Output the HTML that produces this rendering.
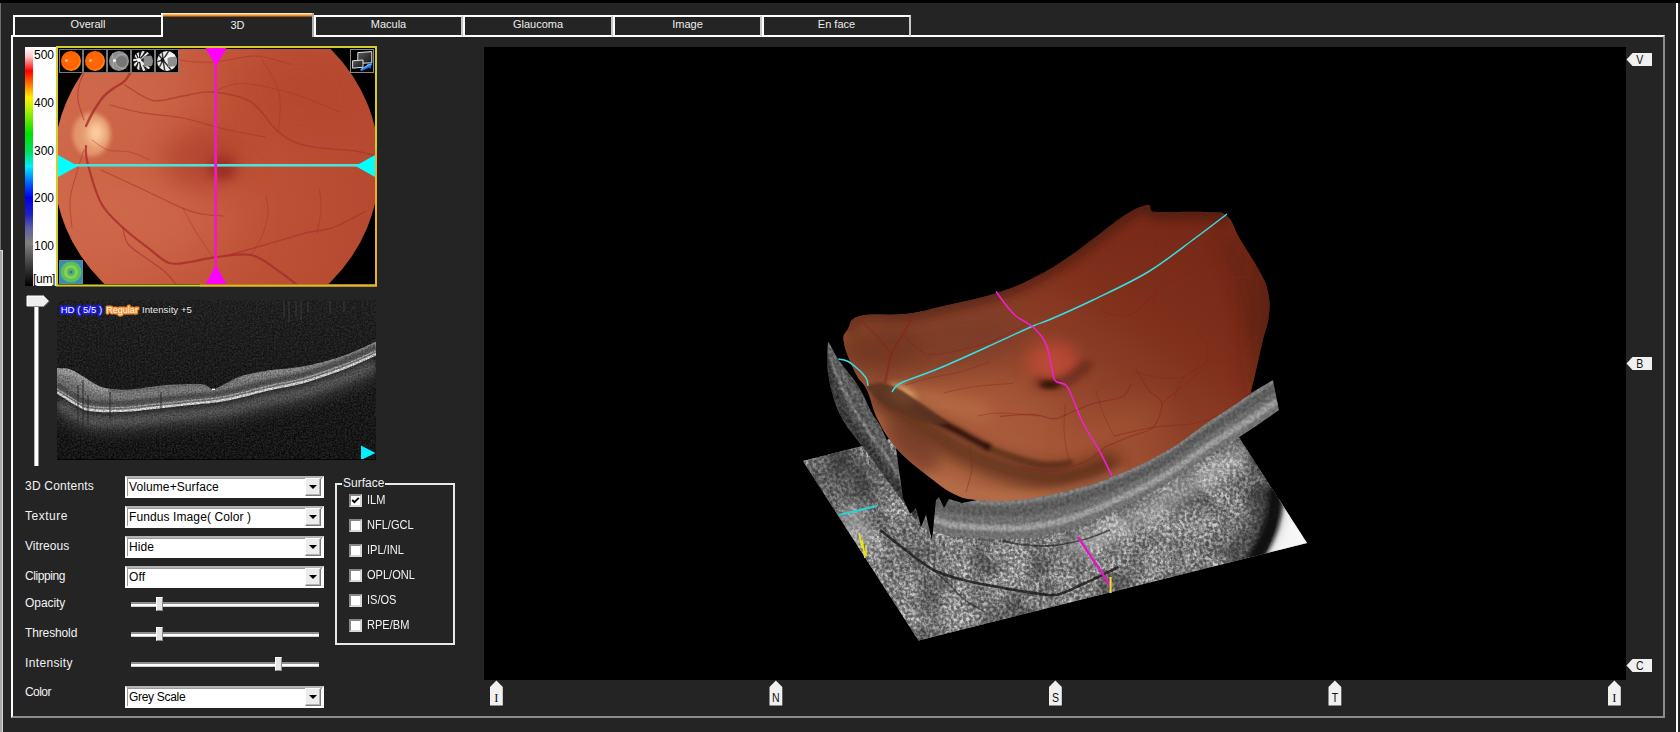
<!DOCTYPE html>
<html lang="en">
<head>
<meta charset="utf-8">
<title>3D OCT Viewer</title>
<style>
html,body{margin:0;padding:0;background:#242424;}
body{width:1680px;height:732px;overflow:hidden;position:relative;font-family:"Liberation Sans",sans-serif;font-size:12px;color:#f0f0f0;}
.abs{position:absolute;}
#topstrip{left:0;top:0;width:1680px;height:3px;background:#000;}
#leftstrip{left:0;top:3px;width:1px;height:729px;background:#6c6c6c;}
#leftgrey{left:0;top:250px;width:2px;height:482px;background:#a8a8a8;border-right:1px solid #d6d6d6;border-top:1px solid #d6d6d6;}
#rightwhite{left:1676px;top:3px;width:2px;height:729px;background:#fff;}
/* main panel */
#panel{left:11px;top:35px;width:1650px;height:679px;border:2px solid #fff;border-right-color:#8c8c8c;border-bottom-color:#8c8c8c;}
.tab{position:absolute;top:15px;height:18px;border:2px solid #fff;border-right-color:#c8c8c8;box-sizing:content-box;text-align:center;font-size:11px;line-height:15px;color:#ececec;background:#242424;}
#tab3d{top:13px;height:24px;border:0;border-left:2px solid #fff;border-right:2px solid #b0b0b0;background:#242424;line-height:25px;}
#tab3d .org{position:absolute;left:0;top:0;right:0;height:4px;background:linear-gradient(#fff4e0 0,#ffd9a0 25%,#f39a3c 50%,#e08020 74%,#5a2c08 100%);}
/* dropdowns */
.lbl{position:absolute;left:25px;font-size:12px;color:#f2f2f2;white-space:nowrap;}
.dd{position:absolute;left:125px;width:195px;height:18px;border:2px solid #fff;border-top-color:#b4b4b4;box-shadow:inset 1px 1px 0 #9a9a9a;background:#fff;color:#000;font-size:12px;line-height:18px;box-sizing:content-box;}
.dd span{position:absolute;left:2px;top:0px;white-space:nowrap;letter-spacing:.1px;}
.dd i{position:absolute;right:1px;top:0;width:14px;height:16px;background:#ececec;border:1px solid #fff;border-right-color:#7c7c7c;border-bottom-color:#7c7c7c;box-shadow:inset -1px -1px 0 #b4b4b4;}
.dd i:after{content:"";position:absolute;left:3px;top:6px;border:4px solid transparent;border-top:4px solid #000;border-bottom:0;}
/* sliders */
.trk{position:absolute;left:131px;width:188px;height:2px;background:#fff;border-top:2px solid #8e8e8e;border-bottom:1px solid #cfcfcf;}
.thb{position:absolute;width:5px;height:12px;background:#e6e6e6;border:1px solid #fff;border-right-color:#8a8a8a;border-bottom-color:#8a8a8a;}
/* checkboxes */
.cb{position:absolute;left:349px;width:9px;height:9px;background:#fff;border:2px solid #d8d8d8;border-top-color:#888;border-left-color:#888;}
.cbl{position:absolute;left:367px;font-size:12px;color:#f2f2f2;white-space:nowrap;transform:scaleX(.92);transform-origin:0 0;}
.mk{position:absolute;font-size:10px;color:#111;}
</style>
</head>
<body>
<div id="topstrip" class="abs"></div>
<div id="leftstrip" class="abs"></div>
<div id="leftgrey" class="abs"></div>
<div id="rightwhite" class="abs"></div>

<div id="panel" class="abs"></div>

<!-- tabs -->
<div class="tab" style="left:13px;width:146px;">Overall</div>
<div class="tab" style="left:314px;width:145px;">Macula</div>
<div class="tab" style="left:463px;width:146px;">Glaucoma</div>
<div class="tab" style="left:613px;width:145px;">Image</div>
<div class="tab" style="left:762px;width:145px;">En face</div>
<div class="tab" id="tab3d" style="left:161px;width:149px;"><div class="org"></div>3D</div>

<!-- LEFT: colour bar + fundus -->
<div id="fundusWrap" class="abs" style="left:25px;top:46px;width:353px;height:241px;">
<div style="position:absolute;left:0;top:1px;width:9px;height:239px;background:linear-gradient(to bottom,#ffffff 0%,#ffc8c8 4%,#ff0000 10%,#ff6a00 15%,#ffee00 21%,#c8f000 25%,#00e000 36%,#00e060 44%,#00f0ff 50%,#0060ff 57%,#0000e8 63%,#2020c0 70%,#6060a0 76%,#808080 82%,#404040 91%,#000000 100%);"></div>
<div style="position:absolute;left:8px;top:1px;width:24px;height:239px;background:#fff;color:#000;font-size:12px;line-height:12px;">
  <span style="position:absolute;left:1px;top:2px;">500</span>
  <span style="position:absolute;left:1px;top:50px;">400</span>
  <span style="position:absolute;left:1px;top:98px;">300</span>
  <span style="position:absolute;left:1px;top:145px;">200</span>
  <span style="position:absolute;left:1px;top:193px;">100</span>
  <span style="position:absolute;left:0px;top:226px;letter-spacing:-0.3px;">[um]</span>
</div>
<svg width="322" height="241" viewBox="56 46 322 241" style="position:absolute;left:31px;top:0;display:block">
<defs>
  <filter id="f05" filterUnits="userSpaceOnUse" x="56" y="46" width="322" height="241"><feGaussianBlur stdDeviation="0.5"/></filter>
  <filter id="f2" filterUnits="userSpaceOnUse" x="56" y="46" width="322" height="241"><feGaussianBlur stdDeviation="2"/></filter>
  <filter id="f5" filterUnits="userSpaceOnUse" x="56" y="46" width="322" height="241"><feGaussianBlur stdDeviation="5"/></filter>
  <filter id="f12" filterUnits="userSpaceOnUse" x="56" y="46" width="322" height="241"><feGaussianBlur stdDeviation="12"/></filter>
  <filter id="f25" filterUnits="userSpaceOnUse" x="56" y="46" width="322" height="241"><feGaussianBlur stdDeviation="25"/></filter>
  <clipPath id="fcirc"><circle cx="216.5" cy="165.5" r="163"/></clipPath>
  <clipPath id="fbox"><rect x="58" y="49" width="317" height="235"/></clipPath>
  <linearGradient id="fbase" gradientUnits="userSpaceOnUse" x1="60" y1="120" x2="375" y2="200">
    <stop offset="0" stop-color="#d06a4c"/>
    <stop offset="0.5" stop-color="#c2563a"/>
    <stop offset="1" stop-color="#b64a30"/>
  </linearGradient>
  <radialGradient id="thO" cx="0.45" cy="0.45" r="0.6">
    <stop offset="0" stop-color="#ff6a08"/><stop offset="0.7" stop-color="#ff6200"/><stop offset="1" stop-color="#ffa018"/>
  </radialGradient>
  <radialGradient id="thG" cx="0.5" cy="0.5" r="0.55">
    <stop offset="0" stop-color="#8a8a8a"/><stop offset="1" stop-color="#b0b0b0"/>
  </radialGradient>
</defs>
<rect x="57" y="47.500" width="319.500" height="238" fill="#000"/>
<g clip-path="url(#fbox)">
 <g clip-path="url(#fcirc)">
  <rect x="50" y="0" width="340" height="340" fill="url(#fbase)"/>
  <ellipse cx="300" cy="95" rx="70" ry="50" fill="#b0432c" opacity="0.6" filter="url(#f25)"/>
  <ellipse cx="150" cy="215" rx="80" ry="50" fill="#d47252" opacity="0.5" filter="url(#f25)"/>
  <ellipse cx="140" cy="100" rx="50" ry="35" fill="#d06e50" opacity="0.5" filter="url(#f25)"/>
  <!-- macula -->
  <ellipse cx="205" cy="160" rx="42" ry="30" fill="#a83a2a" opacity="0.55" filter="url(#f12)"/>
  <ellipse cx="222" cy="168" rx="14" ry="12" fill="#962a20" opacity="0.8" filter="url(#f5)"/>
  <!-- optic disc -->
  <ellipse cx="91.500" cy="134.500" rx="19" ry="22" fill="#e69c70" opacity="0.9" filter="url(#f2)"/>
  <ellipse cx="96" cy="133" rx="9" ry="12" fill="#ffd6a6" opacity="0.9" filter="url(#f5)"/>
  <!-- vessels -->
  <g fill="none" stroke="#a82c2c" stroke-linecap="round" filter="url(#f05)">
   <path d="M86.0,126.0 C87.2,123.7 90.0,116.9 93.0,112.0 C96.0,107.1 100.2,100.4 103.7,96.4 C107.2,92.4 110.3,90.7 114.0,88.0 C117.7,85.3 121.9,84.3 125.6,80.0 C129.3,75.7 132.6,67.3 136.0,62.0 C139.4,56.7 144.3,50.3 146.0,48.0" stroke-width="2.4" opacity="0.8"/>
   <path d="M125.0,85.0 C129.7,87.6 143.3,98.7 153.0,100.5 C162.7,102.3 173.0,97.4 183.0,96.0 C193.0,94.6 201.7,91.0 213.0,92.0 C224.3,93.0 240.1,95.3 251.0,102.0 C261.9,108.7 269.4,124.7 278.6,132.0 C287.8,139.3 293.3,142.4 306.0,145.6 C318.7,148.8 343.3,149.3 355.0,151.0 C366.7,152.7 372.5,155.2 376.0,156.0" stroke-width="1.4" opacity="0.6"/>
   <path d="M110.0,105.0 C115.3,106.3 129.8,110.6 142.0,112.8 C154.2,115.0 169.3,115.3 183.0,118.0 C196.7,120.7 210.3,125.8 224.0,129.0 C237.7,132.2 258.2,135.7 265.0,137.0" stroke-width="1.2" opacity="0.55"/>
   <path d="M84.0,120.0 C83.0,116.7 78.7,106.3 78.0,100.0 C77.3,93.7 78.3,87.7 80.0,82.0 C81.7,76.3 86.7,68.7 88.0,66.0" stroke-width="1.2" opacity="0.55"/>
   <path d="M86.0,146.0 C86.2,148.7 84.8,152.5 87.3,162.0 C89.8,171.5 95.1,192.1 101.0,203.0 C106.9,213.9 114.6,219.8 122.8,227.5 C131.0,235.2 142.3,243.5 150.0,249.4 C157.7,255.3 162.3,260.9 169.0,263.0 C175.7,265.1 182.7,262.9 190.0,262.0 C197.3,261.1 202.8,258.8 213.0,257.6 C223.2,256.4 240.1,252.8 251.0,255.0 C261.9,257.2 271.1,266.2 278.6,271.0 C286.1,275.8 293.1,281.8 296.0,284.0" stroke-width="2.2" opacity="0.8"/>
   <path d="M122.8,227.5 C123.7,230.2 124.1,238.9 128.0,244.0 C131.9,249.1 140.0,253.5 146.0,258.0 C152.0,262.5 159.0,266.7 164.0,271.0 C169.0,275.3 174.0,281.8 176.0,284.0" stroke-width="1.3" opacity="0.6"/>
   <path d="M101.0,170.0 C107.8,173.2 128.3,182.6 142.0,189.0 C155.7,195.4 173.0,204.2 183.0,208.4 C193.0,212.6 195.2,212.7 202.0,214.0 C208.8,215.3 220.3,215.7 224.0,216.0" stroke-width="1.2" opacity="0.55"/>
   <path d="M229.4,255.0 C235.8,253.2 254.9,247.7 267.7,244.0 C280.5,240.3 295.1,235.8 306.0,233.0 C316.9,230.2 323.0,231.2 333.0,227.5 C343.0,223.8 360.5,213.8 366.0,211.0" stroke-width="1.4" opacity="0.6"/>
   <path d="M319.6,189.0 C319.8,192.5 321.4,202.7 321.0,210.0 C320.6,217.3 317.7,229.2 317.0,233.0" stroke-width="1.0" opacity="0.5"/>
   <path d="M84.0,150.0 C82.7,154.2 78.3,166.7 76.0,175.0 C73.7,183.3 70.7,191.2 70.0,200.0 C69.3,208.8 71.7,223.3 72.0,228.0" stroke-width="1.1" opacity="0.5"/>
   <path d="M146.0,48.0 C151.7,50.0 168.5,57.7 180.0,60.0 C191.5,62.3 202.5,62.7 215.0,62.0 C227.5,61.3 242.5,55.7 255.0,56.0 C267.5,56.3 284.2,62.7 290.0,64.0" stroke-width="1.1" opacity="0.5"/>
   <path d="M262.0,60.0 C264.0,63.3 271.0,73.3 274.0,80.0 C277.0,86.7 279.2,91.3 280.0,100.0 C280.8,108.7 278.8,126.7 278.6,132.0" stroke-width="1.0" opacity="0.45"/>
   <path d="M213.0,92.0 C216.7,90.7 226.8,85.0 235.0,84.0 C243.2,83.0 251.2,84.0 262.0,86.0 C272.8,88.0 287.0,91.7 300.0,96.0 C313.0,100.3 333.3,109.3 340.0,112.0" stroke-width="1.0" opacity="0.45"/>
   <path d="M183.0,208.4 C185.2,212.3 191.0,223.8 196.0,232.0 C201.0,240.2 210.2,253.3 213.0,257.6" stroke-width="1.0" opacity="0.45"/>
   <path d="M251.0,255.0 C252.8,251.8 259.2,242.8 262.0,236.0 C264.8,229.2 267.3,220.7 268.0,214.0 C268.7,207.3 266.3,199.0 266.0,196.0" stroke-width="1.0" opacity="0.45"/>
   <path d="M92.0,140.0 C94.7,141.7 101.7,148.0 108.0,150.0 C114.3,152.0 123.0,150.3 130.0,152.0 C137.0,153.7 146.7,158.7 150.0,160.0" stroke-width="1.0" opacity="0.45"/>
  </g>
 </g>
</g>
<!-- scan lines -->
<rect x="58" y="164" width="317" height="2.600" fill="#4fe0d8"/>
<path d="M58,155 L78,166 L58,177 Z M375,155 L355.500,166 L375,177 Z" fill="#00ffff"/>
<rect x="214.200" y="49" width="2.900" height="235" fill="#ee1cc0"/>
<path d="M205.500,48 L226.500,48 L216,66 Z M205.500,284 L226.500,284 L216,265.500 Z" fill="#ff00ff"/>
<!-- thumbnails -->
<g>
 <rect x="59.500" y="49.500" width="23" height="23" fill="#000" stroke="#787878"/>
 <circle cx="71" cy="61" r="10" fill="url(#thO)"/><circle cx="66.500" cy="60.500" r="1.300" fill="#ffd0a0"/>
 <rect x="83.500" y="49.500" width="23" height="23" fill="#000" stroke="#787878"/>
 <circle cx="95" cy="61" r="10" fill="url(#thO)"/><circle cx="90.500" cy="60.500" r="1.300" fill="#ffd0a0"/>
 <rect x="107.500" y="49.500" width="23" height="23" fill="#000" stroke="#787878"/>
 <circle cx="119" cy="61" r="10" fill="#8e8e8e"/>
 <circle cx="121.500" cy="61.500" r="5.500" fill="#747474" filter="url(#f05)"/>
 <path d="M114.500,60.500 C117,54 123,52.500 127.500,56 M114.500,60.500 C116,66 121,70 126,68 M114.500,60.500 C112,57 112,55 113,53 M114.500,60.500 C112.500,64 112.500,66 114,69" stroke="#b4b4b4" stroke-width=".8" fill="none"/>
 <circle cx="114.500" cy="60.500" r="1.600" fill="#f4f4f4"/>
 <rect x="131.500" y="49.500" width="23" height="23" fill="#000" stroke="#787878"/>
 <clipPath id="t4c"><circle cx="143" cy="61" r="10"/></clipPath>
 <g clip-path="url(#t4c)">
  <rect x="132" y="50" width="22" height="22" fill="#262626"/>
  <path d="M139,60 L133,52 M139,60 L137,50 M139,60 L144,50 M139,60 L150,51 M139,60 L132,60 M139,60 L133,67 M139,60 L138,72 M139,60 L145,72 M139,60 L151,70" stroke="#e8e8e8" stroke-width="2.200" fill="none"/>
  <path d="M139,60 L134.500,50 M139,60 L141,50 M139,60 L147,51 M139,60 L132,63.500 M139,60 L135,71 M139,60 L142,72" stroke="#1a1a1a" stroke-width="1.200" fill="none"/>
  <path d="M143.500,56.500 L153,55.500 L153.500,66 L144,66.500 Z" fill="#8a8a8a"/>
  <circle cx="139" cy="60" r="2" fill="#fff"/>
 </g>
 <rect x="155.500" y="49.500" width="23" height="23" fill="#000" stroke="#787878"/>
 <clipPath id="t5c"><circle cx="167" cy="61" r="10"/></clipPath>
 <g clip-path="url(#t5c)">
  <rect x="156" y="50" width="22" height="22" fill="#ececec"/>
  <path d="M163,60 L157,53 M163,60 L162,50 M163,60 L169,50.500 M163,60 L156,62 M163,60 L158,70 M163,60 L165,72 M163,60 L172,71" stroke="#3a3a3a" stroke-width="1.500" fill="none"/>
  <path d="M167.500,57.500 L177.500,56.500 L177.500,66 L168,67 Z" fill="#8e8e8e"/>
  <path d="M163,60 L170,55.500 L176,55" stroke="#fafafa" stroke-width="1.600" fill="none"/>
  <circle cx="162.500" cy="60" r="2" fill="#101010"/>
 </g>
</g>
<!-- top right icon -->
<g>
 <rect x="350.500" y="49.500" width="23" height="23" fill="#000" stroke="#8a8a8a"/>
 <linearGradient id="mon" x1="0" y1="0" x2="1" y2="1"><stop offset="0" stop-color="#5a5a5a"/><stop offset="1" stop-color="#161616"/></linearGradient>
 <path d="M357.800,52.600 L371.800,51.600 L371.800,62.800 L357.800,63.400 Z" fill="url(#mon)" stroke="#e4e4e4" stroke-width="1"/>
 <path d="M352.600,60.800 L363,60 L363,67.200 L352.600,68.200 Z" fill="url(#mon)" stroke="#e4e4e4" stroke-width="1"/>
 <path d="M359.800,69.800 L367.500,65 L366.300,63.600 L372.400,63.200 L370.300,69 L369.200,67.400 L361.200,71.300 Z" fill="#1f78e6"/>
 <path d="M361,69.300 L368,65.200 L371.200,64" fill="none" stroke="#7cd4ff" stroke-width=".9"/>
</g>
<!-- bottom-left thickness map thumb -->
<g>
 <rect x="59" y="260" width="24" height="24" fill="#3c8ab0"/>
 <circle cx="71" cy="272" r="10.500" fill="#58c060"/>
 <circle cx="71" cy="272" r="7" fill="#8ad048"/>
 <circle cx="71" cy="272" r="4" fill="#50b868"/>
 <circle cx="71" cy="272" r="1.600" fill="#2a70c0"/>
 <rect x="59.500" y="260.500" width="23" height="23" fill="none" stroke="#5a8a9a"/>
</g>
<!-- yellow frame -->
<rect x="57" y="47" width="319" height="238.500" fill="none" stroke="#d2cc2c" stroke-width="2"/>
<path d="M376,150 L376,285.500 L200,285.500" fill="none" stroke="#eeb02c" stroke-width="2"/>
</svg>

</div>

<!-- LEFT: b-scan -->
<div id="bscanWrap" class="abs" style="left:57px;top:300px;width:319px;height:160px;background:#111;">
<svg width="319" height="160" viewBox="57 300 319 160" style="position:absolute;left:0;top:0;display:block">
<defs>
  <filter id="bn" x="0" y="0" width="100%" height="100%" color-interpolation-filters="sRGB">
    <feTurbulence type="fractalNoise" baseFrequency="0.55" numOctaves="2" seed="3" result="n"/>
    <feColorMatrix in="n" type="matrix" values="0 0 0 0 0  0 0 0 0 0  0 0 0 0 0  2 2 0 0 -1.5" result="a"/>
    <feComposite in="SourceGraphic" in2="a" operator="in"/>
  </filter>
  <filter id="bnd" x="0" y="0" width="100%" height="100%" color-interpolation-filters="sRGB">
    <feTurbulence type="fractalNoise" baseFrequency="0.6" numOctaves="2" seed="11" result="n"/>
    <feColorMatrix in="n" type="matrix" values="0 0 0 0 0  0 0 0 0 0  0 0 0 0 0  2 2 0 0 -1.6" result="a"/>
    <feComposite in="SourceGraphic" in2="a" operator="in"/>
  </filter>
  <filter id="g05" filterUnits="userSpaceOnUse" x="57" y="300" width="319" height="160"><feGaussianBlur stdDeviation="0.6"/></filter>
  <filter id="g1" filterUnits="userSpaceOnUse" x="57" y="300" width="319" height="160"><feGaussianBlur stdDeviation="1.2"/></filter>
  <filter id="g3" filterUnits="userSpaceOnUse" x="57" y="300" width="319" height="160"><feGaussianBlur stdDeviation="3"/></filter>
  <filter id="g8" filterUnits="userSpaceOnUse" x="57" y="300" width="319" height="160"><feGaussianBlur stdDeviation="7"/></filter>
  <linearGradient id="bbg" x1="0" y1="0" x2="0" y2="1"><stop offset="0" stop-color="#1d1d1d"/><stop offset="0.5" stop-color="#141414"/><stop offset="1" stop-color="#0c0c0c"/></linearGradient>
  <clipPath id="retClip"><path d="M57.0,368.0 C58.5,368.1 63.3,368.1 66.0,368.5 C68.7,368.9 70.0,369.1 73.0,370.5 C76.0,371.9 80.2,374.7 84.0,377.0 C87.8,379.3 92.0,382.6 96.0,384.5 C100.0,386.4 102.3,387.7 108.0,388.5 C113.7,389.3 120.3,390.1 130.0,389.5 C139.7,388.9 154.6,385.9 166.0,385.0 C177.4,384.1 191.8,383.8 198.6,384.0 C205.4,384.2 204.6,385.1 207.0,386.0 C209.4,386.9 211.0,389.3 213.0,389.5 C215.0,389.7 217.2,387.8 219.0,387.0 C220.8,386.2 220.5,386.2 224.0,384.5 C227.5,382.8 232.7,378.8 240.0,376.5 C247.3,374.2 257.5,372.2 268.0,370.5 C278.5,368.8 291.4,368.6 303.0,366.5 C314.6,364.4 328.2,360.6 337.7,357.7 C347.2,354.8 353.6,351.7 360.0,349.0 C366.4,346.3 373.3,342.7 376.0,341.4 L376.0,354.2 C373.3,355.4 366.4,358.8 360.0,361.5 C353.6,364.2 347.2,367.1 337.7,370.5 C328.2,373.9 314.6,378.8 303.0,382.0 C291.4,385.2 278.5,387.1 268.0,389.5 C257.5,391.9 247.3,394.8 240.0,396.5 C232.7,398.2 227.5,399.3 224.0,400.0 C220.5,400.7 220.8,400.4 219.0,400.7 C217.2,401.0 215.0,401.3 213.0,401.6 C211.0,401.9 209.4,402.1 207.0,402.3 C204.6,402.5 205.4,402.3 198.6,403.0 C191.8,403.7 177.4,405.3 166.0,406.5 C154.6,407.7 139.7,409.6 130.0,410.4 C120.3,411.1 113.7,411.0 108.0,411.0 C102.3,411.0 99.9,410.9 96.0,410.5 C92.1,410.1 88.6,410.1 84.8,408.8 C81.0,407.5 76.1,404.3 73.0,402.5 C69.9,400.7 68.7,399.7 66.0,398.0 C63.3,396.3 58.5,393.4 57.0,392.5 Z"/></clipPath>
</defs>
<rect x="57" y="300" width="319" height="160" fill="url(#bbg)"/>
<rect x="57" y="300" width="319" height="160" fill="#3a3a3a" opacity="0.6" filter="url(#bn)"/>
<path d="M57.0,405.5 C58.5,406.4 63.3,409.3 66.0,411.0 C68.7,412.7 69.9,413.7 73.0,415.5 C76.1,417.3 81.0,420.5 84.8,421.8 C88.6,423.1 92.1,423.1 96.0,423.5 C99.9,423.9 102.3,424.0 108.0,424.0 C113.7,424.0 120.3,424.1 130.0,423.4 C139.7,422.6 154.6,420.7 166.0,419.5 C177.4,418.3 191.8,416.7 198.6,416.0 C205.4,415.3 204.6,415.5 207.0,415.3 C209.4,415.1 211.0,414.9 213.0,414.6 C215.0,414.3 217.2,414.0 219.0,413.7 C220.8,413.4 220.5,413.7 224.0,413.0 C227.5,412.3 232.7,411.2 240.0,409.5 C247.3,407.8 257.5,404.9 268.0,402.5 C278.5,400.1 291.4,398.2 303.0,395.0 C314.6,391.8 328.2,386.9 337.7,383.5 C347.2,380.1 353.6,377.2 360.0,374.5 C366.4,371.8 373.3,368.4 376.0,367.2" fill="none" stroke="#5c5c5c" stroke-width="18" opacity="0.62" filter="url(#g8)"/>
<path d="M57.0,402.5 C58.5,403.4 63.3,406.3 66.0,408.0 C68.7,409.7 69.9,410.7 73.0,412.5 C76.1,414.3 81.0,417.5 84.8,418.8 C88.6,420.1 92.1,420.1 96.0,420.5 C99.9,420.9 102.3,421.0 108.0,421.0 C113.7,421.0 120.3,421.1 130.0,420.4 C139.7,419.6 154.6,417.7 166.0,416.5 C177.4,415.3 191.8,413.7 198.6,413.0 C205.4,412.3 204.6,412.5 207.0,412.3 C209.4,412.1 211.0,411.9 213.0,411.6 C215.0,411.3 217.2,411.0 219.0,410.7 C220.8,410.4 220.5,410.7 224.0,410.0 C227.5,409.3 232.7,408.2 240.0,406.5 C247.3,404.8 257.5,401.9 268.0,399.5 C278.5,397.1 291.4,395.2 303.0,392.0 C314.6,388.8 328.2,383.9 337.7,380.5 C347.2,377.1 353.6,374.2 360.0,371.5 C366.4,368.8 373.3,365.4 376.0,364.2" fill="none" stroke="#787878" stroke-width="10" opacity="0.6" filter="url(#g3)"/>
<path d="M57.0,368.0 C58.5,368.1 63.3,368.1 66.0,368.5 C68.7,368.9 70.0,369.1 73.0,370.5 C76.0,371.9 80.2,374.7 84.0,377.0 C87.8,379.3 92.0,382.6 96.0,384.5 C100.0,386.4 102.3,387.7 108.0,388.5 C113.7,389.3 120.3,390.1 130.0,389.5 C139.7,388.9 154.6,385.9 166.0,385.0 C177.4,384.1 191.8,383.8 198.6,384.0 C205.4,384.2 204.6,385.1 207.0,386.0 C209.4,386.9 211.0,389.3 213.0,389.5 C215.0,389.7 217.2,387.8 219.0,387.0 C220.8,386.2 220.5,386.2 224.0,384.5 C227.5,382.8 232.7,378.8 240.0,376.5 C247.3,374.2 257.5,372.2 268.0,370.5 C278.5,368.8 291.4,368.6 303.0,366.5 C314.6,364.4 328.2,360.6 337.7,357.7 C347.2,354.8 353.6,351.7 360.0,349.0 C366.4,346.3 373.3,342.7 376.0,341.4 L376.0,354.2 C373.3,355.4 366.4,358.8 360.0,361.5 C353.6,364.2 347.2,367.1 337.7,370.5 C328.2,373.9 314.6,378.8 303.0,382.0 C291.4,385.2 278.5,387.1 268.0,389.5 C257.5,391.9 247.3,394.8 240.0,396.5 C232.7,398.2 227.5,399.3 224.0,400.0 C220.5,400.7 220.8,400.4 219.0,400.7 C217.2,401.0 215.0,401.3 213.0,401.6 C211.0,401.9 209.4,402.1 207.0,402.3 C204.6,402.5 205.4,402.3 198.6,403.0 C191.8,403.7 177.4,405.3 166.0,406.5 C154.6,407.7 139.7,409.6 130.0,410.4 C120.3,411.1 113.7,411.0 108.0,411.0 C102.3,411.0 99.9,410.9 96.0,410.5 C92.1,410.1 88.6,410.1 84.8,408.8 C81.0,407.5 76.1,404.3 73.0,402.5 C69.9,400.7 68.7,399.7 66.0,398.0 C63.3,396.3 58.5,393.4 57.0,392.5 Z" fill="#7a7a7a" filter="url(#g05)"/>
<g clip-path="url(#retClip)">
  <path d="M57.0,371.0 C58.5,371.1 63.3,371.1 66.0,371.5 C68.7,371.9 70.0,372.1 73.0,373.5 C76.0,374.9 80.2,377.7 84.0,380.0 C87.8,382.3 92.0,385.6 96.0,387.5 C100.0,389.4 106.0,390.8 108.0,391.5" fill="none" stroke="#b8b8b8" stroke-width="9" opacity="0.7" filter="url(#g1)"/>
  <path d="M240.0,378.5 C244.7,377.5 257.5,374.2 268.0,372.5 C278.5,370.8 291.4,370.6 303.0,368.5 C314.6,366.4 328.2,362.6 337.7,359.7 C347.2,356.8 353.6,353.7 360.0,351.0 C366.4,348.3 373.3,344.7 376.0,343.4" fill="none" stroke="#a8a8a8" stroke-width="5" opacity="0.6" filter="url(#g1)"/>
  <path d="M57.0,375.4 C58.5,375.7 63.3,376.6 66.0,377.4 C68.7,378.1 70.0,378.6 73.0,380.1 C76.0,381.6 80.4,384.5 84.2,386.5 C88.1,388.6 92.0,390.8 96.0,392.3 C100.0,393.8 102.3,394.7 108.0,395.2 C113.7,395.8 120.3,396.4 130.0,395.8 C139.7,395.1 154.6,392.5 166.0,391.4 C177.4,390.4 191.8,389.8 198.6,389.7 C205.4,389.6 204.6,390.3 207.0,390.9 C209.4,391.5 211.0,393.1 213.0,393.1 C215.0,393.2 217.2,391.8 219.0,391.1 C220.8,390.4 220.5,390.6 224.0,389.1 C227.5,387.7 232.7,384.7 240.0,382.5 C247.3,380.3 257.5,378.1 268.0,376.2 C278.5,374.3 291.4,373.6 303.0,371.1 C314.6,368.7 328.2,364.6 337.7,361.5 C347.2,358.5 353.6,355.5 360.0,352.8 C366.4,350.0 373.3,346.5 376.0,345.2" fill="none" stroke="#8c8c8c" stroke-width="6" opacity="0.7" filter="url(#g1)"/>
  <path d="M57.0,385.0 C58.5,385.9 63.3,388.8 66.0,390.5 C68.7,392.2 69.9,393.2 73.0,395.0 C76.1,396.8 81.0,400.0 84.8,401.3 C88.6,402.6 92.1,402.6 96.0,403.0 C99.9,403.4 102.3,403.5 108.0,403.5 C113.7,403.5 120.3,403.6 130.0,402.9 C139.7,402.1 154.6,400.2 166.0,399.0 C177.4,397.8 191.8,396.2 198.6,395.5 C205.4,394.8 204.6,395.0 207.0,394.8 C209.4,394.6 211.0,394.4 213.0,394.1 C215.0,393.8 217.2,393.5 219.0,393.2 C220.8,392.9 220.5,393.2 224.0,392.5 C227.5,391.8 232.7,390.8 240.0,389.0 C247.3,387.2 257.5,384.4 268.0,382.0 C278.5,379.6 291.4,377.7 303.0,374.5 C314.6,371.3 328.2,366.4 337.7,363.0 C347.2,359.6 353.6,356.7 360.0,354.0 C366.4,351.3 373.3,347.9 376.0,346.7" fill="none" stroke="#484848" stroke-width="5" opacity="0.75" filter="url(#g1)"/>
</g>
<path d="M57.0,389.1 C58.5,390.0 63.3,392.9 66.0,394.6 C68.7,396.3 69.9,397.3 73.0,399.1 C76.1,400.9 81.0,404.1 84.8,405.4 C88.6,406.7 92.1,406.7 96.0,407.1 C99.9,407.5 102.3,407.6 108.0,407.6 C113.7,407.6 120.3,407.8 130.0,407.0 C139.7,406.2 154.6,404.3 166.0,403.1 C177.4,401.9 191.8,400.3 198.6,399.6 C205.4,398.9 204.6,399.1 207.0,398.9 C209.4,398.7 211.0,398.5 213.0,398.2 C215.0,397.9 217.2,397.6 219.0,397.3 C220.8,397.0 220.5,397.3 224.0,396.6 C227.5,395.9 232.7,394.9 240.0,393.1 C247.3,391.4 257.5,388.5 268.0,386.1 C278.5,383.7 291.4,381.8 303.0,378.6 C314.6,375.4 328.2,370.5 337.7,367.1 C347.2,363.7 353.6,360.8 360.0,358.1 C366.4,355.4 373.3,352.0 376.0,350.8" fill="none" stroke="#b4b4b4" stroke-width="1.2" opacity="0.9" filter="url(#g05)"/>
<path d="M57.0,392.5 C58.5,393.4 63.3,396.3 66.0,398.0 C68.7,399.7 69.9,400.7 73.0,402.5 C76.1,404.3 81.0,407.5 84.8,408.8 C88.6,410.1 92.1,410.1 96.0,410.5 C99.9,410.9 102.3,411.0 108.0,411.0 C113.7,411.0 120.3,411.1 130.0,410.4 C139.7,409.6 154.6,407.7 166.0,406.5 C177.4,405.3 191.8,403.7 198.6,403.0 C205.4,402.3 204.6,402.5 207.0,402.3 C209.4,402.1 211.0,401.9 213.0,401.6 C215.0,401.3 217.2,401.0 219.0,400.7 C220.8,400.4 220.5,400.7 224.0,400.0 C227.5,399.3 232.7,398.2 240.0,396.5 C247.3,394.8 257.5,391.9 268.0,389.5 C278.5,387.1 291.4,385.2 303.0,382.0 C314.6,378.8 328.2,373.9 337.7,370.5 C347.2,367.1 353.6,364.2 360.0,361.5 C366.4,358.8 373.3,355.4 376.0,354.2" fill="none" stroke="#e4e4e4" stroke-width="2.4" filter="url(#g05)"/>
<rect x="57" y="300" width="319" height="160" fill="#000" opacity="0.3" filter="url(#bnd)"/>
<rect x="212" y="388.600" width="3" height="1.400" fill="#fff"/>
<path d="M78,385 L78,430 M83,380 L83,440 M88,395 L88,425 M110,392 L110,420 M161,392 L161,410" stroke="#222" stroke-width="1.6" opacity="0.55" fill="none"/>
<path d="M284,301 L284,318 M289,301 L289,322 M296,301 L296,316 M301,301 L301,320 M308,301 L308,312 M330,301 L330,314 M344,301 L344,312" stroke="#3a3a3a" stroke-width="1.5" opacity="0.7" fill="none"/>
<g font-family="Liberation Sans, sans-serif" font-size="9.800" stroke-linejoin="round" paint-order="stroke">
<text x="60.700" y="313.200" fill="#f4f4ff" stroke="#1a1ae6" stroke-width="3.200" textLength="41.500" lengthAdjust="spacingAndGlyphs">HD ( 5/5 )</text>
<text x="106.300" y="313.200" fill="#fff4e2" stroke="#ee9238" stroke-width="3" textLength="31.600" lengthAdjust="spacingAndGlyphs">Regular</text>
<text x="142" y="313.200" fill="#ececec" stroke="#101010" stroke-width="1.200" stroke-opacity=".6" textLength="50" lengthAdjust="spacingAndGlyphs">Intensity +5</text>
</g>
<path d="M361,445.500 L375.500,453 L361,460 Z" fill="#00f0ff"/>
<rect x="57" y="459" width="319" height="1" fill="#050505"/>
</svg>
</div>

<!-- controls -->
<div class="lbl" style="top:479px;letter-spacing:0.21px;">3D Contents</div>
<div class="lbl" style="top:509px;letter-spacing:0.5px;">Texture</div>
<div class="lbl" style="top:539px;letter-spacing:0.05px;">Vitreous</div>
<div class="lbl" style="top:569px;letter-spacing:-0.43px;">Clipping</div>
<div class="lbl" style="top:596px;letter-spacing:-0.06px;">Opacity</div>
<div class="lbl" style="top:626px;letter-spacing:-0.13px;">Threshold</div>
<div class="lbl" style="top:656px;letter-spacing:0.35px;">Intensity</div>
<div class="lbl" style="top:685px;letter-spacing:-0.55px;">Color</div>

<div class="dd" style="top:476px;"><span>Volume+Surface</span><i></i></div>
<div class="dd" style="top:506px;"><span>Fundus Image( Color )</span><i></i></div>
<div class="dd" style="top:536px;"><span>Hide</span><i></i></div>
<div class="dd" style="top:566px;"><span>Off</span><i></i></div>
<div class="dd" style="top:686px;"><span style="letter-spacing:-.3px">Grey Scale</span><i></i></div>

<div class="trk" style="top:602px;"></div><div class="thb" style="left:156px;top:597px;"></div>
<div class="trk" style="top:632px;"></div><div class="thb" style="left:156px;top:627px;"></div>
<div class="trk" style="top:662px;"></div><div class="thb" style="left:275px;top:657px;"></div>

<!-- surface group -->
<div class="abs" style="left:335px;top:483px;width:116px;height:158px;border:2px solid #e8e8e8;"></div>
<div class="abs" style="left:342px;top:476px;padding:0 1px;background:#242424;font-size:12px;color:#f2f2f2;">Surface</div>
<div class="cb" style="top:494px;"><svg width="9" height="9" viewBox="0 0 9 9" style="position:absolute;left:0;top:0"><path d="M1.200,4 L3.400,6.200 L7.800,1.800" fill="none" stroke="#000" stroke-width="1.900"/></svg></div><div class="cbl" style="top:493px;">ILM</div>
<div class="cb" style="top:519px;"></div><div class="cbl" style="top:518px;">NFL/GCL</div>
<div class="cb" style="top:544px;"></div><div class="cbl" style="top:543px;">IPL/INL</div>
<div class="cb" style="top:569px;"></div><div class="cbl" style="top:568px;">OPL/ONL</div>
<div class="cb" style="top:594px;"></div><div class="cbl" style="top:593px;">IS/OS</div>
<div class="cb" style="top:619px;"></div><div class="cbl" style="top:618px;">RPE/BM</div>

<!-- 3D view -->
<div id="view3d" class="abs" style="left:484px;top:47px;width:1142px;height:633px;background:#000;">
<svg width="1142" height="633" viewBox="484 47 1142 633" style="position:absolute;left:0;top:0;display:block">
<defs>
  <filter id="speckle" x="0" y="0" width="100%" height="100%" color-interpolation-filters="sRGB">
    <feTurbulence type="fractalNoise" baseFrequency="0.3" numOctaves="2" seed="7" result="n"/>
    <feColorMatrix in="n" type="matrix" values="0 0 0 0 0  0 0 0 0 0  0 0 0 0 0  2.2 2.2 0 0 -1.55" result="a"/>
    <feComposite in="SourceGraphic" in2="a" operator="in"/>
  </filter>
  <filter id="speckleD" x="0" y="0" width="100%" height="100%" color-interpolation-filters="sRGB">
    <feTurbulence type="fractalNoise" baseFrequency="0.33" numOctaves="2" seed="23" result="n"/>
    <feColorMatrix in="n" type="matrix" values="0 0 0 0 0  0 0 0 0 0  0 0 0 0 0  2.4 2.4 0 0 -1.9" result="a"/>
    <feComposite in="SourceGraphic" in2="a" operator="in"/>
  </filter>
  <filter id="lowmod" x="0" y="0" width="100%" height="100%" color-interpolation-filters="sRGB">
    <feTurbulence type="fractalNoise" baseFrequency="0.035" numOctaves="2" seed="5" result="n"/>
    <feColorMatrix in="n" type="matrix" values="0 0 0 0 0  0 0 0 0 0  0 0 0 0 0  2.6 0 0 0 -0.95" result="a"/>
    <feComposite in="SourceGraphic" in2="a" operator="in"/>
  </filter>
  <filter id="b05" filterUnits="userSpaceOnUse" x="484" y="47" width="1142" height="633"><feGaussianBlur stdDeviation="0.6"/></filter>
  <filter id="b1" filterUnits="userSpaceOnUse" x="484" y="47" width="1142" height="633"><feGaussianBlur stdDeviation="1"/></filter>
  <filter id="b2" filterUnits="userSpaceOnUse" x="484" y="47" width="1142" height="633"><feGaussianBlur stdDeviation="2"/></filter>
  <filter id="b4" filterUnits="userSpaceOnUse" x="484" y="47" width="1142" height="633"><feGaussianBlur stdDeviation="4"/></filter>
  <filter id="b8" filterUnits="userSpaceOnUse" x="484" y="47" width="1142" height="633"><feGaussianBlur stdDeviation="8"/></filter>
  <filter id="b14" filterUnits="userSpaceOnUse" x="484" y="47" width="1142" height="633"><feGaussianBlur stdDeviation="14"/></filter>
  <filter id="b25" filterUnits="userSpaceOnUse" x="484" y="47" width="1142" height="633"><feGaussianBlur stdDeviation="25"/></filter>
  <linearGradient id="surfBase" gradientUnits="userSpaceOnUse" x1="1000" y1="480" x2="1182" y2="200">
    <stop offset="0" stop-color="#b06644"/>
    <stop offset="0.21" stop-color="#a25436"/>
    <stop offset="0.43" stop-color="#8c4028"/>
    <stop offset="0.64" stop-color="#80301b"/>
    <stop offset="1" stop-color="#742816"/>
  </linearGradient>
  <clipPath id="planeClip"><path d="M803.0,461.0 L918.5,640.5 L1307.0,543.0 L1191.0,363.0 Z"/></clipPath>
  <clipPath id="surfClip"><path d="M844.0,343.0 C842.4,334.0 844.8,334.4 848.0,329.0 C851.2,323.6 848.6,319.0 860.0,316.0 C871.4,313.0 888.2,316.0 905.0,314.0 C921.8,312.0 925.0,310.4 944.0,306.0 C963.0,301.6 981.0,298.2 1000.0,292.0 C1019.0,285.8 1025.0,282.2 1039.0,275.0 C1053.0,267.8 1059.2,263.2 1070.0,256.0 C1080.8,248.8 1082.0,247.2 1093.0,239.0 C1104.0,230.8 1114.2,221.8 1125.0,215.0 C1135.8,208.2 1141.8,206.0 1147.0,205.0 C1152.2,204.0 1148.8,208.6 1151.0,210.0 C1153.2,211.4 1146.8,211.6 1158.0,212.0 C1169.2,212.4 1193.2,211.2 1207.0,212.0 C1220.8,212.8 1220.4,210.6 1227.0,216.0 C1233.6,221.4 1233.4,227.8 1240.0,239.0 C1246.6,250.2 1254.4,261.4 1260.0,272.0 C1265.6,282.6 1266.2,283.4 1268.0,292.0 C1269.8,300.6 1270.2,304.6 1269.0,315.0 C1267.8,325.4 1265.4,329.6 1262.0,344.0 C1258.6,358.4 1255.0,376.6 1252.0,387.0 C1249.0,397.4 1256.0,388.8 1247.0,396.0 C1238.0,403.2 1223.4,411.8 1207.0,423.0 C1190.6,434.2 1184.0,441.2 1165.0,452.0 C1146.0,462.8 1131.0,469.4 1112.0,477.0 C1093.0,484.6 1088.6,485.4 1070.0,490.0 C1051.4,494.6 1037.6,498.0 1019.0,500.0 C1000.4,502.0 990.0,501.2 977.0,500.0 C964.0,498.8 963.8,498.8 954.0,494.0 C944.2,489.2 939.2,484.8 928.0,476.0 C916.8,467.2 908.0,461.2 898.0,450.0 C888.0,438.8 884.2,432.0 878.0,420.0 C871.8,408.0 871.4,399.2 867.0,390.0 C862.6,380.8 860.6,383.4 856.0,374.0 C851.4,364.6 845.6,352.0 844.0,343.0 Z"/></clipPath>
  <clipPath id="bandClip"><path d="M930.0,484.0 C933.7,486.0 944.2,493.3 952.0,496.0 C959.8,498.7 965.8,499.3 977.0,500.0 C988.2,500.7 1003.5,501.7 1019.0,500.0 C1034.5,498.3 1054.5,493.8 1070.0,490.0 C1085.5,486.2 1096.2,483.3 1112.0,477.0 C1127.8,470.7 1149.2,461.0 1165.0,452.0 C1180.8,443.0 1193.3,432.3 1207.0,423.0 C1220.7,413.7 1236.0,403.2 1247.0,396.0 C1258.0,388.8 1268.7,382.7 1273.0,380.0 L1279.0,410.0 C1274.2,413.3 1262.5,421.8 1250.0,430.0 C1237.5,438.2 1219.0,449.3 1204.0,459.0 C1189.0,468.7 1176.0,478.8 1160.0,488.0 C1144.0,497.2 1123.7,506.8 1108.0,514.0 C1092.3,521.2 1080.8,526.8 1066.0,531.0 C1051.2,535.2 1036.3,538.0 1019.0,539.0 C1001.7,540.0 975.5,538.0 962.0,537.0 C948.5,536.0 945.8,535.5 938.0,533.0 C930.2,530.5 918.8,523.8 915.0,522.0 Z"/></clipPath>
  <clipPath id="lbandClip"><path d="M828.0,342.0 C828.0,347.3 826.0,361.8 828.0,374.0 C830.0,386.2 833.8,402.3 840.0,415.0 C846.2,427.7 855.3,436.7 865.0,450.0 C874.7,463.3 888.7,482.2 898.0,495.0 C907.3,507.8 917.2,521.7 921.0,527.0 L935.0,488.0 C928.8,483.2 907.2,469.5 898.0,459.0 C888.8,448.5 884.3,432.7 880.0,425.0 C875.7,417.3 875.5,419.3 872.0,413.0 C868.5,406.7 864.5,395.8 859.0,387.0 C853.5,378.2 844.0,367.3 839.0,360.0 C834.0,352.7 830.7,345.8 829.0,343.0 Z"/></clipPath>
</defs>
<g clip-path="url(#planeClip)">
  <rect x="790" y="350" width="530" height="300" fill="#848484"/>
  <rect x="790" y="350" width="530" height="300" fill="#f4f4f4" opacity="0.7" filter="url(#speckle)"/>
  <rect x="790" y="350" width="530" height="300" fill="#303030" opacity="0.55" filter="url(#speckleD)"/>
  <rect x="790" y="350" width="530" height="300" fill="#141414" opacity="0.42" filter="url(#lowmod)"/>
  <ellipse cx="850" cy="478" rx="40" ry="22" fill="#202020" opacity="0.5" filter="url(#b8)" transform="rotate(50 850 478)"/>
  <ellipse cx="856" cy="528" rx="12" ry="26" fill="#fff" opacity="0.4" filter="url(#b8)" transform="rotate(-32 856 528)"/>
  <path d="M1279,498 C1279,520 1274,538 1262,560 L1320,560 L1320,498 Z" fill="#f6f6f6" filter="url(#b05)"/>
  <path d="M1262,478 C1268,505 1262,530 1236,562" fill="none" stroke="#1a1a1a" stroke-width="30" opacity="0.55" filter="url(#b8)"/>
  <path d="M1276,488 C1277,515 1270,537 1252,562" fill="none" stroke="#080808" stroke-width="15" opacity="0.95" filter="url(#b2)"/>
  <ellipse cx="1266" cy="442" rx="22" ry="30" fill="#101010" opacity="0.85" filter="url(#b8)"/>
  <path d="M1064.0,551.5 C1071.0,548.3 1090.4,540.1 1106.0,532.5 C1121.6,524.9 1141.4,515.2 1157.5,506.0 C1173.6,496.8 1186.8,486.8 1202.5,477.0 C1218.2,467.2 1243.3,452.0 1251.5,447.0" fill="none" stroke="#d4d4d4" stroke-width="24" opacity="0.4" filter="url(#b8)"/>
  <path d="M880.0,530.0 C883.3,532.6 891.2,539.0 900.0,545.6 C908.8,552.2 921.9,563.8 932.8,569.6 C943.7,575.4 954.7,577.6 965.6,580.5 C976.5,583.4 987.1,585.0 998.0,587.0 C1008.9,589.0 1021.2,591.3 1031.0,592.6 C1040.8,593.9 1047.9,596.4 1057.0,594.8 C1066.1,593.1 1075.5,587.3 1085.8,582.7 C1096.1,578.1 1113.1,569.6 1118.6,567.0" fill="none" stroke="#141414" stroke-width="2.6" opacity="0.8" filter="url(#b05)"/>
  <path d="M1002.7,541.0 C1006.4,541.7 1016.6,544.2 1025.0,545.0 C1033.4,545.8 1042.9,546.6 1053.0,545.6 C1063.1,544.6 1076.3,541.6 1085.8,539.0 C1095.3,536.4 1106.0,531.5 1110.0,530.0" fill="none" stroke="#1c1c1c" stroke-width="1.8" opacity="0.65" filter="url(#b05)"/>
  <path d="M932.8,569.6 C935.7,572.2 944.6,579.9 950.0,585.0 C955.4,590.1 959.2,595.5 965.0,600.0 C970.8,604.5 981.7,610.0 985.0,612.0" fill="none" stroke="#1c1c1c" stroke-width="1.5" opacity="0.55" filter="url(#b05)"/>
</g>
<g clip-path="url(#lbandClip)">
  <path d="M828.0,342.0 C828.0,347.3 826.0,361.8 828.0,374.0 C830.0,386.2 833.8,402.3 840.0,415.0 C846.2,427.7 855.3,436.7 865.0,450.0 C874.7,463.3 888.7,482.2 898.0,495.0 C907.3,507.8 917.2,521.7 921.0,527.0 L935.0,488.0 C928.8,483.2 907.2,469.5 898.0,459.0 C888.8,448.5 884.3,432.7 880.0,425.0 C875.7,417.3 875.5,419.3 872.0,413.0 C868.5,406.7 864.5,395.8 859.0,387.0 C853.5,378.2 844.0,367.3 839.0,360.0 C834.0,352.7 830.7,345.8 829.0,343.0 Z" fill="#4c4c4c"/>
  <path d="M828.1,342.1 C828.3,347.2 827.0,360.7 829.3,372.3 C831.7,383.9 836.2,399.4 842.3,411.6 C848.4,423.8 856.9,433.1 865.8,445.6 C874.8,458.1 887.1,474.4 895.8,486.6 C904.6,498.8 914.5,513.5 918.2,518.8" fill="none" stroke="#262626" stroke-width="8" opacity="0.9" filter="url(#b2)"/>
  <path d="M828.5,342.5 C829.3,346.6 830.0,357.2 833.5,367.0 C837.0,376.8 843.7,390.2 849.5,401.0 C855.3,411.8 861.9,421.7 868.5,431.5 C875.1,441.3 882.2,449.8 889.0,460.0 C895.8,470.2 906.1,487.5 909.5,493.0" fill="none" stroke="#a4a4a4" stroke-width="2.6" opacity="0.85" filter="url(#b1)"/>
  <path d="M828.8,342.8 C830.1,346.2 832.2,354.7 836.6,363.1 C840.9,371.5 849.2,383.5 854.8,393.2 C860.5,402.8 865.6,413.3 870.5,421.1 C875.3,429.0 878.5,431.6 884.0,440.4 C889.4,449.2 899.9,468.4 903.1,474.0" fill="none" stroke="#6a6a6a" stroke-width="6" opacity="0.8" filter="url(#b1)"/>
  <rect x="820" y="335" width="130" height="200" fill="#cfcfcf" opacity="0.22" filter="url(#speckle)"/>
  <rect x="820" y="335" width="130" height="200" fill="#101010" opacity="0.3" filter="url(#speckleD)"/>
</g>
<g clip-path="url(#bandClip)">
  <path d="M930.0,484.0 C933.7,486.0 944.2,493.3 952.0,496.0 C959.8,498.7 965.8,499.3 977.0,500.0 C988.2,500.7 1003.5,501.7 1019.0,500.0 C1034.5,498.3 1054.5,493.8 1070.0,490.0 C1085.5,486.2 1096.2,483.3 1112.0,477.0 C1127.8,470.7 1149.2,461.0 1165.0,452.0 C1180.8,443.0 1193.3,432.3 1207.0,423.0 C1220.7,413.7 1236.0,403.2 1247.0,396.0 C1258.0,388.8 1268.7,382.7 1273.0,380.0 L1279.0,410.0 C1274.2,413.3 1262.5,421.8 1250.0,430.0 C1237.5,438.2 1219.0,449.3 1204.0,459.0 C1189.0,468.7 1176.0,478.8 1160.0,488.0 C1144.0,497.2 1123.7,506.8 1108.0,514.0 C1092.3,521.2 1080.8,526.8 1066.0,531.0 C1051.2,535.2 1036.3,538.0 1019.0,539.0 C1001.7,540.0 975.5,538.0 962.0,537.0 C948.5,536.0 945.8,535.5 938.0,533.0 C930.2,530.5 918.8,523.8 915.0,522.0 Z" fill="#686868"/>
  <path d="M929.2,485.9 C932.9,487.9 943.5,495.2 951.3,497.9 C959.1,500.5 965.0,501.2 976.2,501.9 C987.5,502.5 1003.4,503.6 1019.0,501.9 C1034.6,500.3 1054.3,495.9 1069.8,492.1 C1085.3,488.2 1096.0,485.2 1111.8,478.9 C1127.6,472.5 1148.9,462.8 1164.8,453.8 C1180.6,444.8 1193.1,434.2 1206.8,424.8 C1220.6,415.4 1236.1,404.9 1247.2,397.7 C1258.2,390.5 1268.9,384.2 1273.3,381.5" fill="none" stroke="#8c8c8c" stroke-width="4" opacity="0.8" filter="url(#b1)"/>
  <path d="M925.8,494.6 C929.5,496.6 940.2,503.7 948.1,506.4 C955.9,509.0 961.0,509.6 972.8,510.4 C984.6,511.1 1003.0,512.4 1019.0,510.9 C1035.0,509.4 1053.6,505.4 1068.9,501.5 C1084.2,497.6 1095.1,493.9 1110.9,487.4 C1126.7,480.8 1147.7,471.1 1163.6,462.1 C1179.5,453.0 1192.1,442.5 1206.2,433.1 C1220.2,423.7 1236.4,413.0 1247.8,405.5 C1259.3,398.1 1270.2,391.3 1274.7,388.4" fill="none" stroke="#585858" stroke-width="8" opacity="0.8" filter="url(#b1)"/>
  <path d="M922.2,503.8 C926.0,505.7 936.9,512.7 944.7,515.2 C952.6,517.8 956.8,518.4 969.2,519.2 C981.6,520.1 1002.5,521.6 1019.0,520.3 C1035.5,519.0 1052.8,515.3 1067.9,511.3 C1083.1,507.3 1094.2,503.0 1109.9,496.2 C1125.7,489.5 1146.5,479.8 1162.4,470.7 C1178.3,461.6 1191.1,451.2 1205.4,441.7 C1219.8,432.2 1236.8,421.4 1248.6,413.7 C1260.3,406.0 1271.5,398.6 1276.1,395.6" fill="none" stroke="#767676" stroke-width="7" opacity="0.7" filter="url(#b1)"/>
  <path d="M919.2,511.4 C923.0,513.2 934.1,520.1 941.9,522.6 C949.8,525.2 953.4,525.7 966.2,526.6 C979.0,527.5 1002.2,529.3 1019.0,528.1 C1035.8,526.9 1052.1,523.6 1067.1,519.5 C1082.1,515.4 1093.4,510.6 1109.1,503.6 C1124.8,496.7 1145.4,487.0 1161.4,477.9 C1177.4,468.8 1190.2,458.5 1204.8,448.9 C1219.5,439.3 1237.1,428.4 1249.2,420.5 C1261.2,412.6 1272.6,404.7 1277.3,401.6" fill="none" stroke="#ababab" stroke-width="7" opacity="0.9" filter="url(#b1)"/>
  <path d="M916.0,519.3 C919.9,521.2 931.1,527.9 939.0,530.4 C946.8,532.9 949.7,533.4 963.0,534.4 C976.4,535.4 1001.8,537.3 1019.0,536.3 C1036.2,535.2 1051.4,532.3 1066.3,528.1 C1081.2,524.0 1092.6,518.5 1108.3,511.4 C1124.0,504.3 1144.4,494.6 1160.3,485.5 C1176.3,476.3 1189.3,466.1 1204.2,456.5 C1219.1,446.8 1237.4,435.7 1249.8,427.6 C1262.2,419.5 1273.8,411.2 1278.6,407.9" fill="none" stroke="#7a7a7a" stroke-width="7" opacity="0.7" filter="url(#b1)"/>
  <rect x="900" y="370" width="400" height="180" fill="#d8d8d8" opacity="0.12" filter="url(#speckle)"/>
  <rect x="900" y="370" width="400" height="180" fill="#101010" opacity="0.16" filter="url(#speckleD)"/>
</g>
<path d="M896.0,448.0 L928.0,476.0 L954.0,494.0 L977.0,500.0 L962.0,503.0 L949.0,499.0 L944.0,508.0 L939.0,497.0 L936.0,500.0 L932.0,541.0 L926.0,515.0 L921.0,527.0 L916.0,508.0 L910.0,514.0 L903.0,498.0 L899.0,470.0 Z" fill="#000"/>
<g clip-path="url(#surfClip)">
  <rect x="830" y="195" width="450" height="320" fill="url(#surfBase)"/>
  <ellipse cx="925" cy="345" rx="105" ry="32" fill="#783a25" opacity="0.85" filter="url(#b14)" transform="rotate(-10 925 345)"/>
  <path d="M846.0,330.0 C848.3,327.7 850.2,318.7 860.0,316.0 C869.8,313.3 891.0,315.7 905.0,314.0 C919.0,312.3 928.2,309.7 944.0,306.0 C959.8,302.3 984.2,297.2 1000.0,292.0 C1015.8,286.8 1027.3,281.0 1039.0,275.0 C1050.7,269.0 1061.0,262.0 1070.0,256.0 C1079.0,250.0 1083.8,245.8 1093.0,239.0 C1102.2,232.2 1116.0,220.7 1125.0,215.0 C1134.0,209.3 1141.5,205.5 1147.0,205.0 C1152.5,204.5 1148.0,210.8 1158.0,212.0 C1168.0,213.2 1195.5,211.3 1207.0,212.0 C1218.5,212.7 1223.7,215.3 1227.0,216.0" fill="none" stroke="#3a140a" stroke-width="16" opacity="0.5" filter="url(#b4)"/>
  <ellipse cx="880" cy="345" rx="40" ry="22" fill="#6e341f" opacity="0.6" filter="url(#b8)"/>
  <ellipse cx="1000" cy="412" rx="58" ry="22" fill="#ac5c3a" opacity="0.5" filter="url(#b14)" transform="rotate(12 1000 412)"/>
  <ellipse cx="1120" cy="430" rx="50" ry="22" fill="#a85636" opacity="0.5" filter="url(#b14)" transform="rotate(-25 1120 430)"/>
  <ellipse cx="1272" cy="320" rx="18" ry="90" fill="#4a1c10" opacity="0.6" filter="url(#b14)"/>
  <path d="M1225,240 C1240,275 1252,305 1256,340" fill="none" stroke="#5a2012" stroke-width="14" opacity="0.5" filter="url(#b8)"/>
  <path d="M872,392 C895,408 925,430 960,450 C990,466 1020,476 1056,478 C1080,478 1100,470 1118,460" fill="none" stroke="#46220f" stroke-width="24" opacity="0.7" filter="url(#b8)"/>
  <ellipse cx="912" cy="445" rx="34" ry="18" fill="#6a3420" opacity="0.7" filter="url(#b8)" transform="rotate(42 912 445)"/>
  <path d="M925,476 C950,492 985,500 1030,497 C1065,494 1095,484 1125,470" fill="none" stroke="#ba7650" stroke-width="9" opacity="0.55" filter="url(#b4)"/>
  <path d="M905,400 C912,405 935,420 960,432 C972,439 980,443 990,448" fill="none" stroke="#150603" stroke-width="6" opacity="0.85" filter="url(#b2)"/>
  <path d="M985,446 C1000,453 1010,456 1020,459 C1040,466 1055,467 1072,462" fill="none" stroke="#1c0905" stroke-width="4.500" opacity="0.5" filter="url(#b2)"/>
  <path d="M900,394 C925,398 955,404 990,414" fill="none" stroke="#cc8656" stroke-width="12" opacity="0.5" filter="url(#b8)"/>
  <ellipse cx="901" cy="395" rx="15" ry="8" fill="#f6bc78" opacity="0.95" filter="url(#b4)" transform="rotate(28 901 395)"/>
  <path d="M866,386 C876,381 890,383 903,391 C918,401 934,412 948,424 C932,426 912,419 896,411 C884,405 872,397 866,386 Z" fill="#5c3424" opacity="0.9" filter="url(#b1)"/>
  <ellipse cx="1053" cy="362" rx="26" ry="20" fill="#d24e3e" opacity="0.6" filter="url(#b8)"/>
  <path d="M1036,381 C1048,388 1066,384 1076,374 C1082,370 1086,366 1088,362" fill="none" stroke="#2a0e08" stroke-width="7" opacity="0.6" filter="url(#b4)"/>
  <ellipse cx="1050" cy="384.500" rx="10" ry="3.200" fill="#1c0905" opacity="0.85" filter="url(#b2)"/>
  <path d="M1000.0,416.5 C1005.5,416.1 1023.7,413.9 1032.8,414.3 C1041.9,414.7 1048.1,419.1 1054.6,418.7 C1061.1,418.3 1065.4,414.6 1072.0,412.0 C1078.6,409.4 1085.6,405.9 1094.0,403.4 C1102.4,400.9 1116.2,400.1 1122.4,396.8 C1128.6,393.5 1129.6,385.9 1131.0,383.7" fill="none" stroke="#8a2220" stroke-width="1.2" opacity="0.5" filter="url(#b05)"/>
  <path d="M1135.5,368.4 C1137.7,372.0 1144.2,384.2 1148.6,390.0 C1153.0,395.8 1161.0,397.2 1161.7,403.4 C1162.4,409.6 1158.1,422.0 1153.0,427.4 C1147.9,432.8 1139.0,432.7 1131.0,436.0 C1123.0,439.3 1109.3,445.2 1105.0,447.0" fill="none" stroke="#8a2220" stroke-width="1.2" opacity="0.5" filter="url(#b05)"/>
  <path d="M1161.7,403.4 C1165.7,400.1 1179.4,389.2 1185.8,383.7 C1192.2,378.2 1197.6,372.8 1200.0,370.6" fill="none" stroke="#8a2220" stroke-width="1.1" opacity="0.45" filter="url(#b05)"/>
  <path d="M1065.6,403.4 C1065.3,407.0 1064.0,418.1 1064.0,425.0 C1064.0,431.9 1064.6,438.8 1065.6,445.0 C1066.6,451.2 1069.3,459.5 1070.0,462.4" fill="none" stroke="#8a2220" stroke-width="1.0" opacity="0.4" filter="url(#b05)"/>
  <path d="M1096.0,390.0 C1097.1,393.7 1099.8,404.3 1102.7,412.0 C1105.7,419.7 1111.9,432.0 1113.7,436.0" fill="none" stroke="#8a2220" stroke-width="1.0" opacity="0.4" filter="url(#b05)"/>
  <path d="M1020.0,466.0 C1022.1,466.5 1027.0,468.2 1032.8,469.0 C1038.6,469.8 1048.1,471.4 1054.6,471.0 C1061.1,470.6 1065.8,469.0 1072.0,466.8 C1078.2,464.6 1086.3,461.3 1091.8,458.0 C1097.3,454.7 1102.8,448.8 1105.0,447.0" fill="none" stroke="#8a2220" stroke-width="1.3" opacity="0.5" filter="url(#b05)"/>
  <path d="M1113.7,436.0 C1120.2,434.6 1139.2,429.6 1153.0,427.4 C1166.8,425.2 1183.9,425.9 1196.7,423.0 C1209.5,420.1 1224.5,412.2 1230.0,410.0" fill="none" stroke="#8a2220" stroke-width="1.1" opacity="0.45" filter="url(#b05)"/>
  <path d="M1100.0,242.0 C1104.1,241.6 1116.0,240.9 1124.6,239.7 C1133.2,238.5 1146.3,233.6 1151.6,234.8 C1156.9,236.0 1155.8,245.0 1156.6,247.0" fill="none" stroke="#8a2220" stroke-width="1.0" opacity="0.4" filter="url(#b05)"/>
  <path d="M1100.0,311.0 C1104.9,311.6 1119.2,318.4 1129.5,314.7 C1139.8,311.0 1151.2,296.0 1161.5,288.8 C1171.8,281.6 1180.8,275.7 1191.0,271.6 C1201.2,267.5 1216.5,263.2 1223.0,264.0 C1229.5,264.8 1225.1,274.5 1230.0,276.6 C1234.9,278.7 1248.7,276.6 1252.4,276.6" fill="none" stroke="#8a2220" stroke-width="1.2" opacity="0.5" filter="url(#b05)"/>
  <path d="M1156.6,291.0 C1155.8,293.1 1152.4,301.5 1151.6,303.6" fill="none" stroke="#8a2220" stroke-width="1.0" opacity="0.4" filter="url(#b05)"/>
  <path d="M1196.0,333.0 C1197.6,334.7 1204.1,338.1 1205.7,343.0 C1207.3,347.9 1209.4,356.9 1205.7,362.6 C1202.0,368.3 1188.9,371.2 1183.6,377.4 C1178.3,383.6 1175.4,396.2 1173.8,400.0" fill="none" stroke="#8a2220" stroke-width="1.1" opacity="0.45" filter="url(#b05)"/>
  <path d="M1136.9,372.4 C1140.8,373.3 1152.2,377.2 1160.0,378.0 C1167.8,378.8 1179.7,377.5 1183.6,377.4" fill="none" stroke="#8a2220" stroke-width="1.0" opacity="0.4" filter="url(#b05)"/>
  <path d="M1205.7,362.6 C1210.2,361.8 1224.2,362.2 1232.8,357.7 C1241.3,353.2 1253.0,339.3 1257.0,335.6" fill="none" stroke="#8a2220" stroke-width="1.0" opacity="0.4" filter="url(#b05)"/>
  <path d="M885.0,383.4 C886.1,378.5 888.6,362.2 891.6,354.0 C894.6,345.8 899.4,340.3 903.0,334.0 C906.6,327.7 911.3,319.0 913.0,316.0" fill="none" stroke="#8a2220" stroke-width="2.0" opacity="0.6" filter="url(#b05)"/>
  <path d="M891.6,354.0 C888.8,350.7 880.2,339.5 875.0,334.0 C869.8,328.5 862.9,323.2 860.5,321.0" fill="none" stroke="#8a2220" stroke-width="1.3" opacity="0.5" filter="url(#b05)"/>
  <path d="M903.0,334.0 C907.1,337.3 915.9,351.8 927.7,354.0 C939.5,356.2 961.6,349.8 973.6,347.0 C985.6,344.2 990.6,341.7 1000.0,337.5 C1009.4,333.3 1025.0,324.6 1030.0,322.0" fill="none" stroke="#8a2220" stroke-width="1.2" opacity="0.45" filter="url(#b05)"/>
  <path d="M1006.0,298.0 C1009.3,296.3 1019.4,291.2 1026.0,288.0 C1032.6,284.8 1037.5,282.8 1045.7,278.5 C1053.9,274.2 1070.1,264.8 1075.0,262.0" fill="none" stroke="#8a2220" stroke-width="1.0" opacity="0.4" filter="url(#b05)"/>
  <path d="M977.0,416.0 C980.8,415.5 989.7,413.0 1000.0,413.0 C1010.3,413.0 1032.5,415.5 1039.0,416.0" fill="none" stroke="#8a2220" stroke-width="1.0" opacity="0.4" filter="url(#b05)"/>
  <path d="M944.0,393.0 C948.9,391.9 962.1,388.3 973.6,386.7 C985.1,385.1 1006.4,383.9 1013.0,383.4" fill="none" stroke="#8a2220" stroke-width="1.0" opacity="0.4" filter="url(#b05)"/>
  <path d="M969.0,445.8 C969.5,449.5 972.5,460.3 972.0,468.0 C971.5,475.7 967.0,488.0 966.0,492.0" fill="none" stroke="#8a2220" stroke-width="1.1" opacity="0.45" filter="url(#b05)"/>
  <path d="M905.0,385.0 C909.2,383.8 920.8,380.2 930.0,378.0 C939.2,375.8 950.0,374.7 960.0,372.0 C970.0,369.3 985.0,363.7 990.0,362.0" fill="none" stroke="#8a2220" stroke-width="1.0" opacity="0.4" filter="url(#b05)"/>
</g>
<path d="M1227.0,214.0 C1221.5,218.2 1207.2,229.3 1194.0,239.0 C1180.8,248.7 1164.8,261.8 1148.0,272.0 C1131.2,282.2 1109.3,292.1 1093.0,300.0 C1076.7,307.9 1060.0,315.2 1050.0,319.5 C1040.0,323.8 1043.5,321.4 1033.0,326.0 C1022.5,330.6 1002.9,339.8 987.0,347.0 C971.1,354.2 951.8,363.0 937.5,369.0 C923.2,375.0 908.6,379.2 901.0,383.0 C893.4,386.8 893.5,390.5 892.0,392.0" fill="none" stroke="#35e0e6" stroke-width="1.5"/>
<path d="M838.5,359.0 C839.9,359.3 844.1,359.7 847.0,361.0 C849.9,362.3 852.9,364.8 855.6,367.0 C858.3,369.2 861.1,371.8 863.0,374.0 C864.9,376.2 866.2,378.0 867.0,380.0 C867.8,382.0 867.8,385.0 868.0,386.0" fill="none" stroke="#35e0e6" stroke-width="1.5"/>
<path d="M839,515 L877,506" fill="none" stroke="#2cd0d6" stroke-width="2.2"/>
<path d="M996.0,291.6 C997.7,293.8 1002.7,300.9 1006.0,305.0 C1009.3,309.1 1011.3,312.2 1016.0,316.0 C1020.7,319.8 1029.0,323.3 1034.0,328.0 C1039.0,332.7 1043.0,337.2 1046.0,344.0 C1049.0,350.8 1050.7,363.2 1052.0,369.0 C1053.3,374.8 1053.2,376.3 1054.0,378.5 C1054.8,380.7 1055.2,381.0 1057.0,382.0 C1058.8,383.0 1062.8,382.8 1065.0,384.5 C1067.2,386.2 1067.0,385.6 1070.0,392.0 C1073.0,398.4 1078.2,413.3 1083.0,423.0 C1087.8,432.7 1094.2,441.2 1099.0,450.0 C1103.8,458.8 1109.8,471.7 1112.0,476.0" fill="none" stroke="#f020d0" stroke-width="1.6"/>
<path d="M1078,537 L1110.6,586" fill="none" stroke="#e018c8" stroke-width="2.4"/>
<path d="M1110.6,577 L1110.6,593" stroke="#f4e020" stroke-width="2"/>
<path d="M859,533 L862,548 M862,540 L865,558 M866,545 L866,556" stroke="#e8e020" stroke-width="1.6" fill="none"/>
</svg>
</div>

<!-- vertical slider left of b-scan -->
<div class="abs" style="left:34px;top:305px;width:3px;height:161px;background:#fff;border-left:1px solid #b0b0b0;border-right:1px solid #8a8a8a;"></div>
<svg class="abs" style="left:26px;top:295px;" width="24" height="13" viewBox="0 0 24 13">
  <path d="M1,1 L18,1 L23,6 L18,11 L1,11 Z" fill="#eeeeee"/>
  <path d="M1,11.500 L18,11.500 L23,6.300" fill="none" stroke="#8a8a8a" stroke-width="1"/>
  <path d="M1,11 L1,1 L18,1" fill="none" stroke="#ffffff" stroke-width="1"/>
</svg>

<!-- right side markers -->
<svg class="abs" style="left:1624px;top:47px;" width="32" height="633" viewBox="1624 47 32 633" font-family="Liberation Sans, sans-serif" font-size="10.500" fill="#101010">
  <g>
    <path d="M1626.500,59.500 L1632.500,53 L1652,53 L1652,66 L1632.500,66 Z" fill="#f0f0f0"/>
    <text transform="translate(1636.300,64.300) scale(.88,1)" x="0" y="0" font-size="12">V</text>
  </g>
  <g>
    <path d="M1626.500,363.500 L1632.500,357 L1652,357 L1652,370 L1632.500,370 Z" fill="#f0f0f0"/>
    <text transform="translate(1636.300,368.300) scale(.88,1)" x="0" y="0" font-size="12">B</text>
  </g>
  <g>
    <path d="M1626.500,665.500 L1632.500,659 L1652,659 L1652,672 L1632.500,672 Z" fill="#f0f0f0"/>
    <text transform="translate(1636,670.300) scale(.88,1)" x="0" y="0" font-size="12">C</text>
  </g>
</svg>

<!-- bottom markers -->
<svg class="abs" style="left:484px;top:679px;" width="1150" height="30" viewBox="484 679 1150 30" font-family="Liberation Sans, sans-serif" font-size="10.500" fill="#101010" text-anchor="middle">
  <g><path d="M496.400,680.500 L502.800,687 L502.800,705.600 L490,705.600 L490,687 Z" fill="#f0f0f0"/><text transform="translate(496.400,701.500)" x="0" y="0" font-family="Liberation Serif, serif" font-size="12.500">I</text></g>
  <g><path d="M775.900,680.500 L782.300,687 L782.300,705.600 L769.500,705.600 L769.500,687 Z" fill="#f0f0f0"/><text transform="translate(775.900,701.500) scale(.88,1)" x="0" y="0" font-size="12">N</text></g>
  <g><path d="M1055.400,680.500 L1061.800,687 L1061.800,705.600 L1049,705.600 L1049,687 Z" fill="#f0f0f0"/><text transform="translate(1055.400,701.500) scale(.88,1)" x="0" y="0" font-size="12">S</text></g>
  <g><path d="M1334.900,680.500 L1341.300,687 L1341.300,705.600 L1328.500,705.600 L1328.500,687 Z" fill="#f0f0f0"/><text transform="translate(1334.900,701.500) scale(.88,1)" x="0" y="0" font-size="12">T</text></g>
  <g><path d="M1614.400,680.500 L1620.800,687 L1620.800,705.600 L1608,705.600 L1608,687 Z" fill="#f0f0f0"/><text transform="translate(1614.400,701.500)" x="0" y="0" font-family="Liberation Serif, serif" font-size="12.500">I</text></g>
</svg>

</body>
</html>
